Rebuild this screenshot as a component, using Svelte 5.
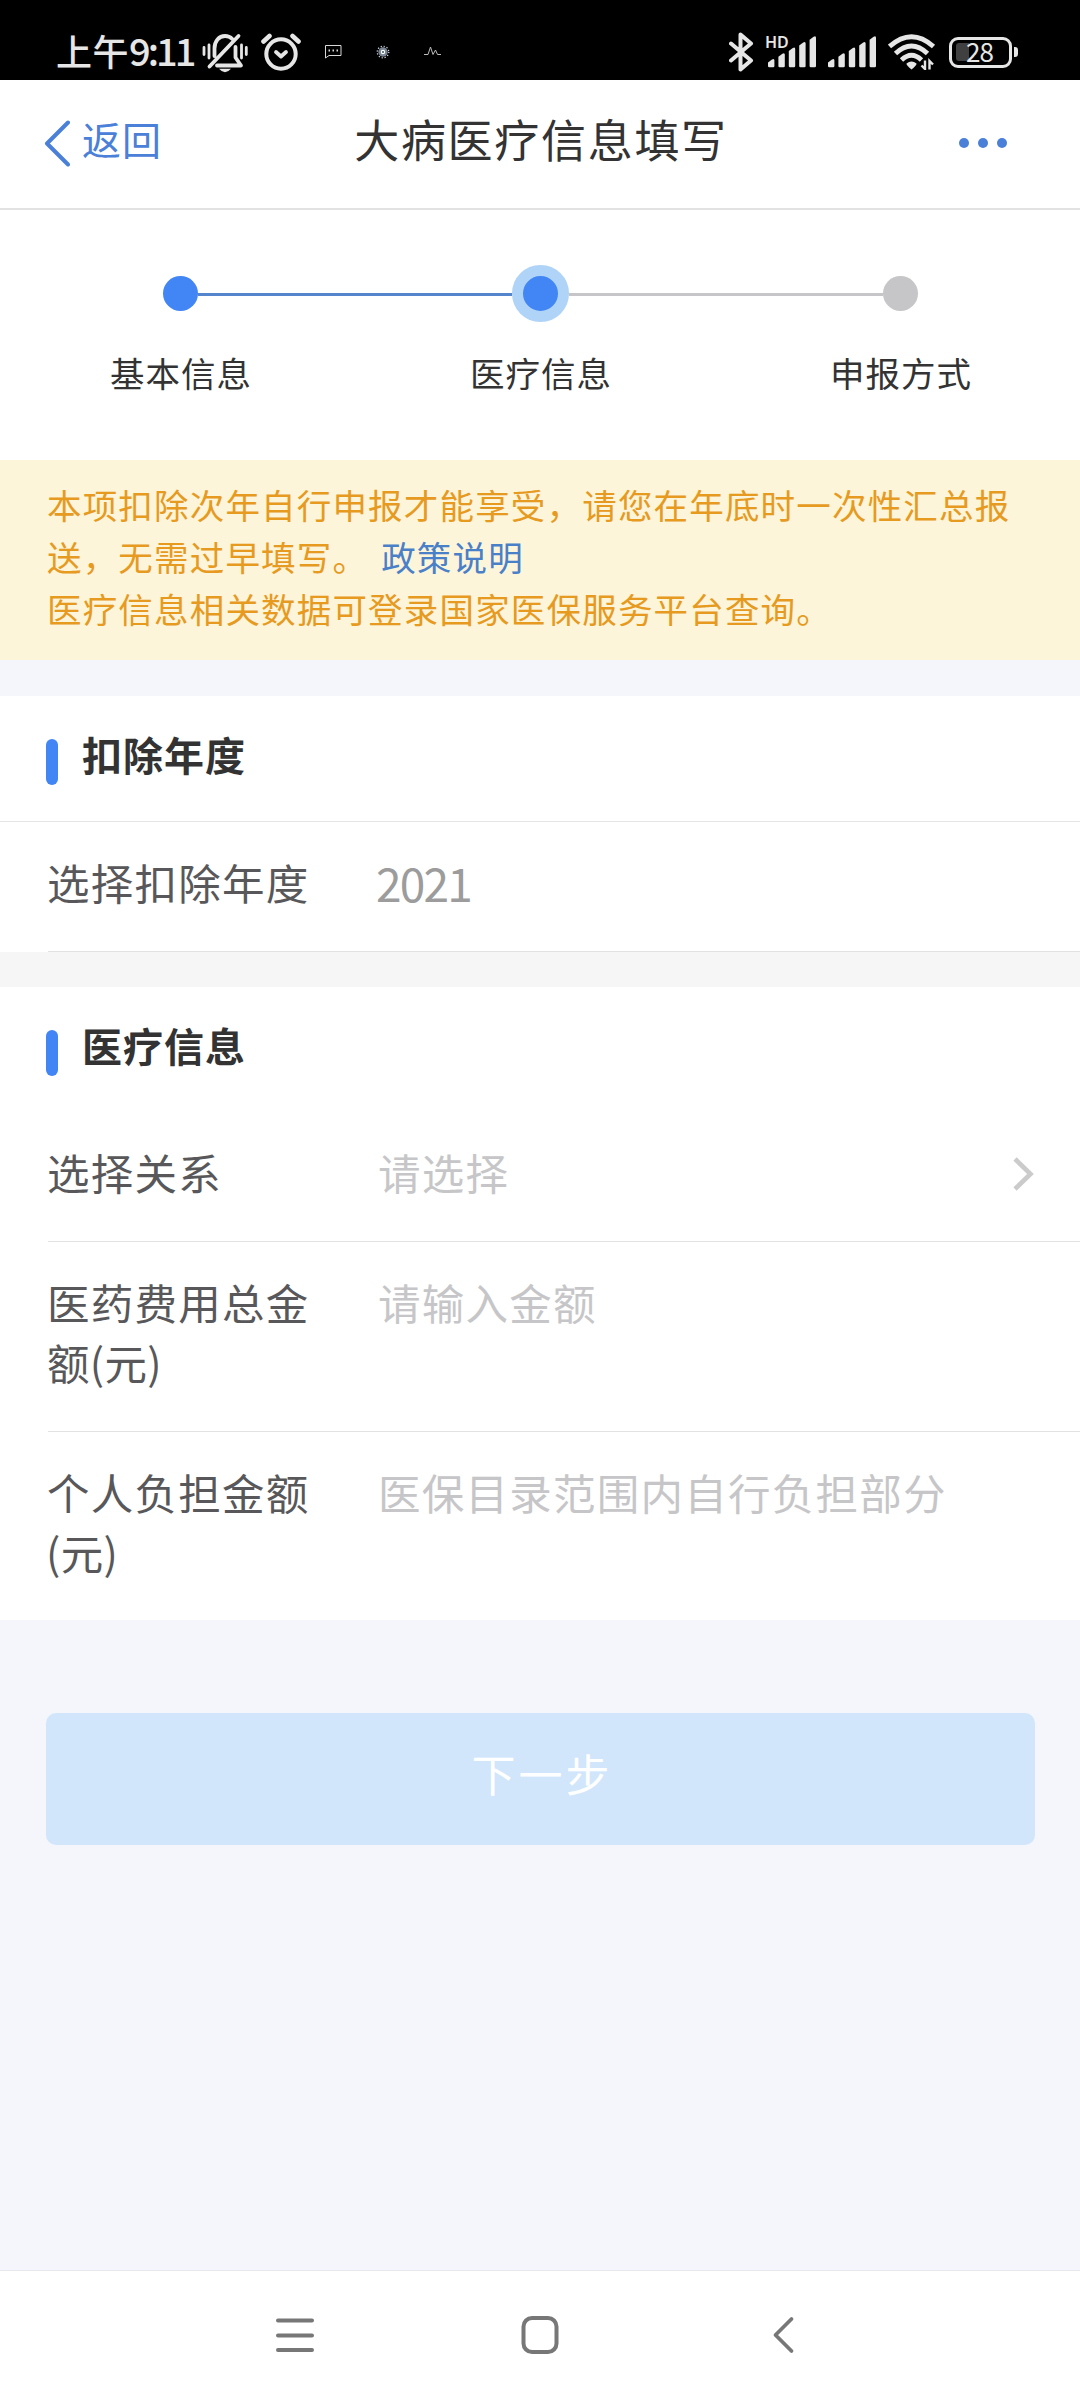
<script>
  const steps = [
    { label: '基本信息', state: 'done' },
    { label: '医疗信息', state: 'current' },
    { label: '申报方式', state: 'todo' },
  ];
  const bars = [0, 1, 2, 3, 4];
</script>

{#snippet signal()}
  <svg class="signal" width="48" height="32" viewBox="0 0 48 32">
    {#each bars as i}
      <path
        d="M{i * 10.4} {31 - 6 - i * 5.7 + 1.5} l4 -3 q2.4 -1.4 2.4 1 V30 q0 1.2 -1.2 1.2 h-4 q-1.2 0 -1.2 -1.2 z"
        fill="#e6e6e6"
      />
    {/each}
  </svg>
{/snippet}

<div class="screen">
  <div class="status">
    <div class="left">
      <span class="ampm">上午</span><span class="clock">9:11</span>
      <svg class="bell" width="46" height="40" viewBox="0 0 46 40" fill="none" stroke="#e6e6e6" stroke-width="3.8" stroke-linecap="round">
        <path d="M12.500 23V15.500C12.500 8 17 3 23 3c3 0 5.500 1.200 7.300 3M36.500 3L7.500 33.500M33.500 14v10.500l5.500 8H15" stroke-linejoin="round" />
        <path d="M2 14.500v7M7 12v13M39.500 12v13M44.300 14.500v7" stroke-width="2.800" />
        <path d="M17 35.800h12q-6 7 -12 0z" fill="#e6e6e6" stroke="none" />
      </svg>
      <svg class="alarm" width="40" height="38" viewBox="0 0 40 38" fill="none" stroke="#e6e6e6" stroke-linecap="round">
        <circle cx="20" cy="21" r="14.700" stroke-width="4" />
        <path d="M2.500 8.500L8.500 3M37.500 8.500L31.500 3" stroke-width="4.600" />
        <path d="M15 19l5 4.500 5-4.500" stroke-width="3.800" stroke-linejoin="round" />
      </svg>
      <svg class="chat" width="17" height="14" viewBox="0 0 17 14" fill="none" stroke="#d8d8d8" stroke-width="1">
        <path d="M.5 13V.5h15.500v10H4L.5 13" />
        <path d="M3.500 5.500h1.500M7.500 5.500H9M11.500 5.500H13" stroke-width="2" />
      </svg>
      <svg class="gear" width="14" height="14" viewBox="0 0 14 14" fill="none">
        <circle cx="7" cy="7" r="5.800" stroke="#d5dde6" stroke-width="1.200" stroke-dasharray="1.200 1.830" />
        <circle cx="7" cy="7" r="4.700" fill="#7b8795" />
        <circle cx="7" cy="7" r="1.600" stroke="#fff" fill="#456" stroke-width="1.200" />
      </svg>
      <svg class="pulse" width="17" height="10" viewBox="0 0 17 10" fill="none" stroke="#bdbdbd" stroke-width="1">
        <path d="M0 8.500h4L6.500 1l2.500 7.500L11.500 4l2 4.500H17" />
      </svg>
    </div>
    <div class="right">
      <svg class="bt" width="25" height="40" viewBox="0 0 25 40" fill="none" stroke="#e6e6e6" stroke-width="4" stroke-linecap="round" stroke-linejoin="round">
        <path d="M2 11.500L22 28.500 11.500 37.500V2.500L22 11.500 2 28.500" />
      </svg>
      <div class="sim"><span class="hd">HD</span>{@render signal()}</div>
      <div class="sim2">{@render signal()}</div>
      <svg class="wifi" width="48" height="36" viewBox="0 0 48 36" fill="none" stroke="#e6e6e6" stroke-width="4.800">
        <path d="M1.500 12.500Q23.500 -7 45.500 12.500M7.500 19.500Q23.500 4.500 39.500 19.500M13.500 26Q23.500 16.500 33.500 26" />
        <path d="M18.500 29.500q5-4 10 0q.5 1.500-5 6q-5.500-4.500-5-6z" fill="#e6e6e6" stroke="none" />
        <path d="M37 26.500v8.500l-3.500-3.500M41.500 35.500v-8.500l3.500 3.500" stroke-width="2.400" />
      </svg>
      <div class="battery"><i></i><span>28</span></div>
      <b class="nub"></b>
    </div>
  </div>

  <header>
    <div class="back">
      <svg width="26" height="47" viewBox="0 0 26 47" fill="none" stroke="#4a80d8" stroke-width="4" stroke-linecap="round" stroke-linejoin="round">
        <path d="M24 2.500L3 23.500 24 44.500" />
      </svg>
      <span>返回</span>
    </div>
    <h1>大病医疗信息填写</h1>
    <div class="more"><i></i><i></i><i></i></div>
  </header>

  <div class="steps">
    {#each steps as s}
      <div class="step {s.state}">
        <div class="rail"><i class="line"></i><span class="dot"></span><i class="line"></i></div>
        <p>{s.label}</p>
      </div>
    {/each}
  </div>

  <div class="notice">
    <p>本项扣除次年自行申报才能享受，请您在年底时一次性汇总报<br />送，无需过早填写。<a>政策说明</a></p>
    <p>医疗信息相关数据可登录国家医保服务平台查询。</p>
  </div>

  <section class="year">
    <h2>扣除年度</h2>
    <div class="row">
      <label>选择扣除年度</label><span class="value">2021</span>
    </div>
  </section>

  <section class="medical">
    <h2>医疗信息</h2>
    <div class="row first">
      <label>选择关系</label><span class="hint">请选择</span>
      <svg class="go" width="22" height="34" viewBox="0 0 22 34" fill="none" stroke="#cbcbcb" stroke-width="4.600"><path d="M2 2l15.500 15L2 32" /></svg>
    </div>
    <div class="row tall">
      <label>医药费用总金<br />额<span class="unit">(元)</span></label><span class="hint">请输入金额</span>
    </div>
    <div class="row tall last">
      <label>个人负担金额<br /><span class="unit">(元)</span></label><span class="hint">医保目录范围内自行负担部分</span>
    </div>
  </section>

  <main><button>下一步</button></main>

  <nav>
    <svg width="38" height="40" viewBox="0 0 38 40" stroke="#777" stroke-width="4" stroke-linecap="round"><path d="M2 5.500h34M2 20.500h34M2 35h34" /></svg>
    <svg width="38" height="40" viewBox="0 0 38 40" fill="none" stroke="#777" stroke-width="4"><rect x="2.500" y="3" width="33" height="34" rx="8.500" /></svg>
    <svg width="38" height="40" viewBox="0 0 38 40" fill="none" stroke="#777" stroke-width="3.800" stroke-linecap="round" stroke-linejoin="round"><path d="M26.500 4L10.500 20l16 16" /></svg>
  </nav>
</div>

<style>
  :global(body) {
    background: #f5f6fb;
  }
  .screen {
    width: 1080px;
    height: 2400px;
    display: flex;
    flex-direction: column;
    background: #f5f6fb;
    color: #333;
    font-family: 'Noto Sans CJK SC', sans-serif;
    overflow: hidden;
    white-space: nowrap;
  }
  p,
  h1,
  h2 {
    margin: 0;
    font-weight: 400;
  }
  svg {
    display: block;
    flex: none;
  }
  .status {
    height: 80px;
    flex: none;
    background: #000;
    color: #e6e6e6;
    display: flex;
    justify-content: space-between;
    box-sizing: border-box;
    padding: 31px 62px 0 56px;
  }
  .left,
  .right {
    display: flex;
    align-items: center;
    height: 42px;
  }
  .ampm {
    font-size: 36px;
    font-weight: 500;
    line-height: 42px;
    letter-spacing: 0.5px;
    margin-top: -4px;
  }
  .clock {
    font-size: 38px;
    font-weight: 500;
    line-height: 42px;
    letter-spacing: -3px;
    width: 73px;
    margin-top: -4px;
  }
  .bell {
    margin-top: 2px;
  }
  .alarm {
    margin-left: 13px;
  }
  .chat {
    margin-left: 24px;
  }
  .gear {
    margin-left: 34px;
  }
  .pulse {
    margin: -2px 0 0 34px;
  }
  .bt {
    margin-right: 14px;
  }
  .sim {
    position: relative;
    margin-right: 12px;
  }
  .hd {
    position: absolute;
    left: -3px;
    top: -2px;
    font: 600 16px/16px 'Noto Sans', sans-serif;
  }
  .sim2 {
    margin-right: 12px;
  }
  .wifi {
    margin-right: 13px;
  }
  .battery {
    width: 63px;
    height: 31px;
    box-sizing: border-box;
    border: 3px solid #e6e6e6;
    border-radius: 9px;
    display: flex;
    align-items: center;
  }
  .battery i {
    width: 13px;
    height: 18px;
    margin-left: 4px;
    background: #404040;
    border-radius: 3px 0 0 3px;
  }
  .battery span {
    font: 400 26px/26px 'Noto Sans CJK SC', sans-serif;
    letter-spacing: -1px;
    margin: -3px 0 0 -3px;
  }
  .nub {
    width: 4px;
    height: 10px;
    margin-left: 2px;
    border-radius: 0 3px 3px 0;
    background: #e6e6e6;
  }
  header {
    height: 130px;
    flex: none;
    box-sizing: border-box;
    border-bottom: 2px solid #e2e2e2;
    background: #fff;
    display: grid;
    grid-template-columns: 300px 1fr 300px;
    align-items: center;
    padding-bottom: 2px;
  }
  .back {
    display: flex;
    align-items: center;
    padding-left: 44px;
    color: #4a80d8;
    font-size: 39px;
    line-height: 48px;
    letter-spacing: 1px;
  }
  .back span {
    margin: -10px 0 0 12px;
  }
  h1 {
    text-align: center;
    font-size: 45px;
    line-height: 60px;
    letter-spacing: 1.700px;
    padding: 0 0 8px 2px;
  }
  .more {
    display: flex;
    gap: 9px;
    justify-content: flex-end;
    padding-right: 73px;
  }
  .more i {
    width: 10px;
    height: 10px;
    border-radius: 50%;
    background: #4a80d8;
  }
  .steps {
    height: 250px;
    flex: none;
    box-sizing: border-box;
    background: #fff;
    display: flex;
    padding-top: 54px;
  }
  .step {
    width: 360px;
    text-align: center;
  }
  .rail {
    height: 58px;
    display: flex;
    align-items: center;
  }
  .line {
    flex: 1;
    height: 3px;
    margin-top: 2px;
    background: #c6c6c8;
  }
  .dot {
    width: 35px;
    height: 35px;
    border-radius: 50%;
    background: #4285f4;
  }
  .done .line,
  .current .line:first-child {
    background: #5585cc;
  }
  .done .line:first-child,
  .todo .line:last-child {
    background: transparent;
  }
  .current .dot {
    border: 11px solid #b0d3f8;
  }
  .todo .dot {
    background: #c6c6c8;
  }
  .step p {
    font-size: 34.500px;
    line-height: 50px;
    letter-spacing: 1px;
    margin-top: 25px;
    padding-left: 2px;
  }
  .notice {
    height: 200px;
    flex: none;
    box-sizing: border-box;
    background: #fdf5d9;
    color: #e69a1f;
    padding: 18px 0 0 47px;
    font-size: 34.500px;
    line-height: 52px;
    letter-spacing: 1.180px;
  }
  .notice a {
    color: #4a80c8;
    margin-left: 13px;
  }
  section {
    background: #fff;
    flex: none;
    box-sizing: border-box;
  }
  .year {
    height: 256px;
    margin-top: 36px;
  }
  .medical {
    height: 668px;
    border-top: 35px solid #f6f6f6;
  }
  section h2 {
    height: 125px;
    box-sizing: border-box;
    padding: 33px 0 0 46px;
    display: flex;
    font-size: 40px;
    font-weight: 700;
    line-height: 50px;
    letter-spacing: 1px;
  }
  section h2::before {
    content: '';
    width: 12px;
    height: 46px;
    margin: 10px 24px 0 0;
    border-radius: 6px;
    background: #4285f4;
  }
  .year h2 {
    border-bottom: 1px solid #e5e5e5;
    height: 126px;
  }
  .row {
    display: flex;
    margin-left: 48px;
    box-sizing: border-box;
    height: 130px;
    padding-top: 30px;
    border-bottom: 1px solid #e2e2e2;
    font-size: 42.500px;
    line-height: 60px;
    letter-spacing: 1.250px;
  }
  .tall {
    height: 190px;
  }
  .last {
    border: 0;
  }
  label {
    width: 331px;
    margin-left: -1px;
    color: #58585a;
  }
  .unit {
    letter-spacing: 0.300px;
    margin-left: -1px;
  }
  .value {
    color: #9c9c9c;
    font-size: 46px;
    letter-spacing: -1.800px;
    margin-left: -2px;
  }
  .hint {
    color: #c6c6c8;
  }
  .go {
    margin: 15px 45px 0 auto;
  }
  main {
    flex: 1;
    padding: 93px 45px 0 46px;
    border-bottom: 1px solid #e6e8ee;
  }
  button {
    display: block;
    width: 100%;
    height: 132px;
    border: 0;
    border-radius: 10px;
    background: #d1e6fb;
    color: #fff;
    font: 400 44px/60px 'Noto Sans CJK SC', sans-serif;
    letter-spacing: 3px;
    padding: 0 0 12px 3px;
  }
  nav {
    height: 129px;
    flex: none;
    background: #fff;
    display: flex;
    justify-content: space-between;
    box-sizing: border-box;
    padding: 44px 277px 0 276px;
  }
</style>
